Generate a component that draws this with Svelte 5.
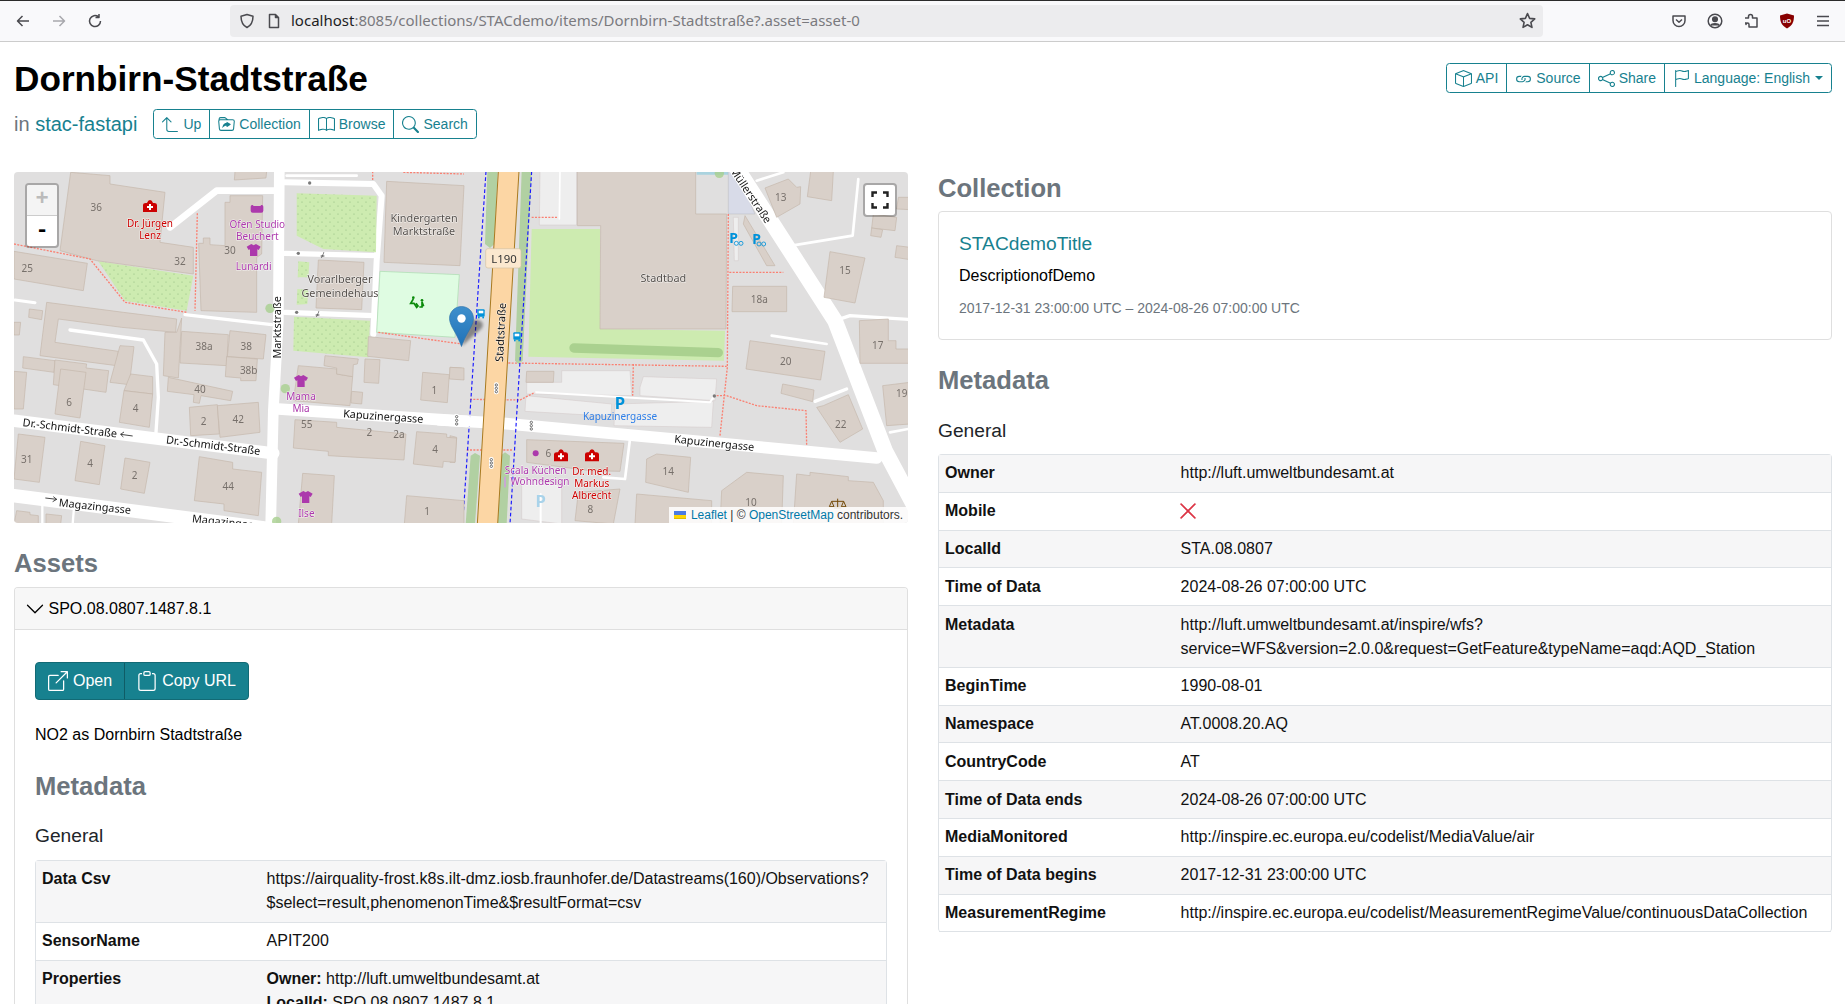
<script>
  const icons = {
    up: ["M4.854 1.146a.5.5 0 0 0-.708 0l-4 4a.5.5 0 1 0 .708.708L4 2.707V12.5A2.5 2.5 0 0 0 6.5 15h8a.5.5 0 0 0 0-1h-8A1.5 1.5 0 0 1 5 12.5V2.707l3.146 3.147a.5.5 0 1 0 .708-.708l-4-4z"],
    folder: ["m11.798 8.271-3.182 1.97c-.27.166-.616-.036-.616-.372V9.1s-2.571-.3-4 2.4c.571-4.8 3.143-4.8 4-4.8v-.769c0-.336.346-.538.616-.371l3.182 1.969c.27.166.27.576 0 .742z","m.5 3 .04.87a1.99 1.99 0 0 0-.342 1.311l.637 7A2 2 0 0 0 2.826 14h10.348a2 2 0 0 0 1.991-1.819l.637-7A2 2 0 0 0 13.81 3H9.828a2 2 0 0 1-1.414-.586l-.828-.828A2 2 0 0 0 6.172 1H2.5a2 2 0 0 0-2 2zm.694 2.09A1 1 0 0 1 2.19 4h11.62a1 1 0 0 1 .996 1.09l-.636 7a1 1 0 0 1-.996.91H2.826a1 1 0 0 1-.995-.91l-.637-7zM6.172 2a1 1 0 0 1 .707.293L7.586 3H2.19c-.24 0-.47.042-.683.12L1.5 2.98a1 1 0 0 1 1-.98h3.672z"],
    book: ["M1 2.828c.885-.37 2.154-.769 3.388-.893 1.33-.134 2.458.063 3.112.752v9.746c-.935-.53-2.12-.603-3.213-.493-1.18.12-2.37.461-3.287.811V2.828zm7.5-.141c.654-.689 1.782-.886 3.112-.752 1.234.124 2.503.523 3.388.893v9.923c-.918-.35-2.107-.692-3.287-.81-1.094-.111-2.278-.039-3.213.492V2.687zM8 1.783C7.015.936 5.587.81 4.287.94c-1.514.153-3.042.672-3.994 1.105A.5.5 0 0 0 0 2.5v11a.5.5 0 0 0 .707.455c.882-.4 2.303-.881 3.68-1.02 1.409-.142 2.59.087 3.223.877a.5.5 0 0 0 .78 0c.633-.79 1.814-1.019 3.222-.877 1.378.139 2.8.62 3.681 1.02A.5.5 0 0 0 16 13.5v-11a.5.5 0 0 0-.293-.455c-.952-.433-2.48-.952-3.994-1.105C10.413.809 8.985.936 8 1.783z"],
    search: ["M11.742 10.344a6.5 6.5 0 1 0-1.397 1.398h-.001c.03.04.062.078.098.115l3.85 3.85a1 1 0 0 0 1.415-1.414l-3.85-3.85a1.007 1.007 0 0 0-.115-.1zM12 6.5a5.5 5.5 0 1 1-11 0 5.5 5.5 0 0 1 11 0z"],
    box: ["M8.186 1.113a.5.5 0 0 0-.372 0L1.846 3.5 8 5.961 14.154 3.5 8.186 1.113zM15 4.239l-6.5 2.6v7.922l6.5-2.6V4.24zM7.5 14.762V6.838L1 4.239v7.925l6.5 2.6zM7.443.184a1.5 1.5 0 0 1 1.114 0l7.129 2.852A.5.5 0 0 1 16 3.5v8.662a1 1 0 0 1-.629.928l-7.185 2.874a.5.5 0 0 1-.372 0L.63 13.09a1 1 0 0 1-.63-.928V3.5a.5.5 0 0 1 .314-.464L7.443.184z"],
    link: ["M6.354 5.5H4a3 3 0 0 0 0 6h3a3 3 0 0 0 2.83-4H9c-.086 0-.17.01-.25.031A2 2 0 0 1 7 10.5H4a2 2 0 1 1 0-4h1.535c.218-.376.495-.714.82-1z","M9 5.5a3 3 0 0 0-2.83 4h1.098A2 2 0 0 1 9 6.5h3a2 2 0 1 1 0 4h-1.535a4.02 4.02 0 0 1-.82 1H12a3 3 0 1 0 0-6H9z"],
    share: ["M13.5 1a1.5 1.5 0 1 0 0 3 1.5 1.5 0 0 0 0-3zM11 2.5a2.5 2.5 0 1 1 .603 1.628l-6.718 3.12a2.499 2.499 0 0 1 0 1.504l6.718 3.12a2.5 2.5 0 1 1-.488.876l-6.718-3.12a2.5 2.5 0 1 1 0-3.256l6.718-3.12A2.504 2.504 0 0 1 11 2.5zm-8.5 4a1.5 1.5 0 1 0 0 3 1.5 1.5 0 0 0 0-3zm11 5.5a1.5 1.5 0 1 0 0 3 1.5 1.5 0 0 0 0-3z"],
    flag: ["M14.778.085A.5.5 0 0 1 15 .5V8a.5.5 0 0 1-.314.464L14.5 8l.186.464-.003.001-.006.003-.023.009a12.435 12.435 0 0 1-.397.15c-.264.095-.631.223-1.047.35-.816.252-1.879.523-2.71.523-.847 0-1.548-.28-2.158-.525l-.028-.01C7.68 8.71 7.14 8.5 6.5 8.5c-.7 0-1.638.23-2.437.477A19.626 19.626 0 0 0 3 9.342V15.5a.5.5 0 0 1-1 0V.5a.5.5 0 0 1 1 0v.282c.226-.079.496-.17.79-.26C4.606.272 5.67 0 6.5 0c.84 0 1.524.277 2.121.519l.043.018C9.286.788 9.828 1 10.5 1c.7 0 1.638-.23 2.437-.477a19.587 19.587 0 0 0 1.349-.476l.019-.007.004-.002.002-.001.001-.001h.001zM14 1.221c-.22.078-.48.167-.766.255-.81.252-1.872.523-2.734.523-.886 0-1.592-.286-2.203-.534l-.008-.003C7.662 1.21 7.139 1 6.5 1c-.669 0-1.606.229-2.415.478A21.294 21.294 0 0 0 3 1.845v6.433c.22-.078.48-.167.766-.255C4.576 7.77 5.638 7.5 6.5 7.5c.847 0 1.548.28 2.158.525l.028.01C9.32 8.29 9.86 8.5 10.5 8.5c.668 0 1.606-.229 2.415-.478A21.317 21.317 0 0 0 14 7.655V1.222z"],
    open: ["M8.636 3.5a.5.5 0 0 0-.5-.5H1.5A1.5 1.5 0 0 0 0 4.5v10A1.5 1.5 0 0 0 1.5 16h10a1.5 1.5 0 0 0 1.5-1.5V7.864a.5.5 0 0 0-1 0V14.5a.5.5 0 0 1-.5.5h-10a.5.5 0 0 1-.5-.5v-10a.5.5 0 0 1 .5-.5h6.636a.5.5 0 0 0 .5-.5z","M16 .5a.5.5 0 0 0-.5-.5h-5a.5.5 0 0 0 0 1h3.793L6.146 9.146a.5.5 0 1 0 .708.708L15 1.707V5.5a.5.5 0 0 0 1 0v-5z"],
    clip: ["M4 1.5H3a2 2 0 0 0-2 2V14a2 2 0 0 0 2 2h10a2 2 0 0 0 2-2V3.5a2 2 0 0 0-2-2h-1v1h1a1 1 0 0 1 1 1V14a1 1 0 0 1-1 1H3a1 1 0 0 1-1-1V3.5a1 1 0 0 1 1-1h1v-1z","M9.5 1a.5.5 0 0 1 .5.5v1a.5.5 0 0 1-.5.5h-3a.5.5 0 0 1-.5-.5v-1a.5.5 0 0 1 .5-.5h3zm-3-1A1.5 1.5 0 0 0 5 1.5v1A1.5 1.5 0 0 0 6.5 4h3A1.5 1.5 0 0 0 11 2.5v-1A1.5 1.5 0 0 0 9.5 0h-3z"],
    chev: ["M1.646 4.646a.5.5 0 0 1 .708 0L8 10.293l5.646-5.647a.5.5 0 0 1 .708.708l-6 6a.5.5 0 0 1-.708 0l-6-6a.5.5 0 0 1 0-.708z"],
    x: ["M2.146 2.854a.5.5 0 1 1 .708-.708L8 7.293l5.146-5.147a.5.5 0 0 1 .708.708L8.707 8l5.147 5.146a.5.5 0 0 1-.708.708L8 8.707l-5.146 5.147a.5.5 0 0 1-.708-.708L7.293 8 2.146 2.854Z"]
  };

  const navLeft = [["up","Up"],["folder","Collection"],["book","Browse"],["search","Search"]];
  const navRight = [["box","API"],["link","Source"],["share","Share"],["flag","Language: English"]];

  const rightRows = [
    ["Owner","http://luft.umweltbundesamt.at"],
    ["Mobile",null],
    ["LocalId","STA.08.0807"],
    ["Time of Data","2024-08-26 07:00:00 UTC"],
    ["Metadata","http://luft.umweltbundesamt.at/inspire/wfs?\nservice=WFS&version=2.0.0&request=GetFeature&typeName=aqd:AQD_Station"],
    ["BeginTime","1990-08-01"],
    ["Namespace","AT.0008.20.AQ"],
    ["CountryCode","AT"],
    ["Time of Data ends","2024-08-26 07:00:00 UTC"],
    ["MediaMonitored","http://inspire.ec.europa.eu/codelist/MediaValue/air"],
    ["Time of Data begins","2017-12-31 23:00:00 UTC"],
    ["MeasurementRegime","http://inspire.ec.europa.eu/codelist/MeasurementRegimeValue/continuousDataCollection"]
  ];

  // Map geometry. Coordinates are in tile units of 1/3 px.
  const b3 = [
    "212,25 330,35 330,60 495,85 480,235 580,250 580,330 290,290 180,260",
    "705,22 800,22 798,42 703,48",
    "675,115 690,115 690,95 788,95 785,270 770,280 770,445 603,440 596,238 610,238 610,222 630,222 630,242 675,245",
    "1160,52 1392,65 1380,305 1152,295",
    "42,262 262,298 250,380 42,345",
    "955,288 1092,295 1085,437 948,432",
    "140,415 370,445 530,465 527,505 365,490 175,465 165,535 355,562 350,605 120,575",
    "88,435 128,440 125,467 86,460",
    "42,475 62,475 58,513 42,513",
    "545,462 535,642 490,635 495,505 530,505",
    "545,502 685,512 680,605 540,597",
    "690,500 798,512 790,585 682,578",
    "680,578 772,585 768,650 722,650 722,642 676,638",
    "70,578 165,590 162,625 68,612",
    "165,588 260,600 258,612 326,620 318,685 160,662",
    "182,615 258,625 240,762 165,750",
    "360,545 402,548 388,662 330,655",
    "392,630 458,638 458,690 372,680",
    "372,680 458,690 448,790 358,775",
    "42,622 80,625 70,735 42,735",
    "505,640 698,682 692,710 603,695 598,718 580,715 582,692 502,682",
    "568,730 652,722 658,810 572,815",
    "652,725 775,715 780,805 660,820",
    "55,810 135,820 118,955 42,945",
    "242,832 315,845 298,962 225,950",
    "375,882 450,895 433,988 362,975",
    "598,878 698,895 698,915 785,925 775,1055 672,1040 672,1020 583,1010",
    "895,605 1010,615 1010,630 1058,638 1050,725 880,710",
    "975,575 1075,585 1072,600 1060,602 1058,638 1010,630 1010,612 972,605",
    "1105,518 1232,530 1226,590 1103,577",
    "1095,585 1140,587 1136,658 1092,655",
    "1055,682 1088,685 1085,720 1053,717",
    "1268,625 1348,632 1342,716 1262,708",
    "1350,610 1392,612 1392,648 1348,645",
    "885,767 1010,775 1010,790 1218,810 1212,888 985,875 985,862 880,852",
    "1250,803 1340,810 1340,820 1370,822 1365,895 1330,892 1328,910 1240,900",
    "908,928 1003,935 995,1080 895,1080",
    "1220,995 1392,1010 1392,1080 1213,1080",
    "138,1050 185,1055 182,1080 138,1080",
    "50,1040 90,1045 90,1052 115,1055 115,1080 42,1080"
  ];
  const b4 = [
    "382,22 737,22 737,150 830,150 828,495 450,495 452,185 382,185",
    "945,72 1015,45 1040,70 1052,68 1050,120 980,160",
    "1082,22 1150,22 1145,110 1072,98",
    "1270,150 1340,160 1335,200 1265,192",
    "1265,192 1298,197 1293,220 1262,215",
    "1340,245 1380,250 1380,287 1335,280",
    "1345,100 1380,100 1380,137 1340,135",
    "1140,263 1245,282 1228,357 1215,417 1122,400",
    "848,367 1010,367 1010,443 846,443",
    "1228,470 1315,465 1315,530 1338,530 1338,555 1380,555 1380,598 1230,598",
    "900,530 1125,562 1112,648 888,615",
    "998,660 1092,678 1088,713 993,688",
    "1120,725 1195,692 1238,795 1170,835 1100,730",
    "1298,665 1380,655 1380,780 1310,785",
    "230,622 312,622 310,655 228,655",
    "230,827 522,838 510,922 420,920 230,895",
    "590,885 620,870 722,880 715,985 587,955",
    "385,985 510,975 490,1080 375,1070",
    "815,980 890,925 1000,935 995,1080 810,1080",
    "560,990 785,1010 785,1080 555,1080",
    "1040,930 1080,935 1080,925 1195,938 1195,950 1270,955 1300,1010 1300,1080 1030,1080",
    "0,610 35,612 33,645 0,640",
    "0,815 20,820 15,895 0,895",
    "885,155 975,305 950,305 880,180"
  ];
  const parks3 = [
    "890,88 1130,95 1128,265 970,255 890,215",
    "295,292 580,335 560,440 375,410",
    "895,292 928,295 925,340 893,340",
    "892,375 925,378 922,420 890,422",
    "882,458 1110,470 1105,580 880,560"
  ];
  const pave4 = [
    "270,22 380,22 380,183 268,183",
    "335,620 540,620 545,695 260,690 230,690 230,655 335,655",
    "228,695 485,720 483,757 225,742",
    "570,670 580,638 800,645 795,710 570,695",
    "495,720 790,712 785,790 492,785",
    "215,940 335,965 335,1080 215,1065",
    "850,160 865,160 865,290 853,290"
  ];
  const roads3 = [
    ["838,15 835,470 820,740 812,1085",32],
    ["42,770 820,868",37],
    ["835,735 1400,772",35],
    ["42,995 820,1095",40],
    ["510,190 650,80 830,80",20],
    ["855,55 1120,60 1145,95 1130,290 1120,510",18],
    ["855,268 1130,275",16],
    ["855,445 1120,455",16],
    ["860,35 1070,35",8],
    ["555,452 815,482",10],
    ["210,498 430,528 470,600 475,700 468,805",10],
    ["45,408 105,416",9],
    ["127,1020 127,1080",7],
    ["222,1030 218,1080",7]
  ];
  const roads4 = [
    ["-30,768 160,778 1280,882",35],
    ["862,15 1155,470 1305,860 1395,1030",47],
    ["1225,45 1208,215 1025,245",8],
    ["920,50 1000,25",8],
    ["1155,470 1200,455 1385,467",10],
    ["965,515 1130,540",8],
    ["1095,712 1190,675",10],
    ["1320,805 1385,793",8],
    ["540,825 525,945 460,940",8],
    ["330,22 328,165",5],
    ["258,685 780,715 790,700",6],
    ["272,990 272,1080",6]
  ];
  const paths3 = [
    "42,240 270,285 375,415 560,445","592,148 585,440","1118,22 1118,50","1135,505 1385,540","1210,25 1392,30"
  ];
  const paths4 = [
    "245,160 325,160","835,150 832,610 810,815","838,325 1000,325","175,597 830,607","550,600 548,695",
    "60,706 210,708 255,685","800,695 830,695 920,725 1068,740 1070,845","50,858 190,858"
  ];
  const nums3 = [
    ["36",289,129],["32",540,290],["30",690,258],["25",82,312],["38a",612,546],["38",739,546],["38b",746,619],["40",600,675],
    ["6",207,713],["4",407,733],["2",611,770],["42",715,766],["31",80,886],["4",270,897],["2",404,934],["44",685,967],
    ["55",920,779],["2",1108,805],["2a",1197,809],["4",1305,856],["1",1303,677],["1",1281,1042]
  ];
  const nums4 = [
    ["13",992,98],["15",1185,318],["18a",928,405],["17",1283,543],["20",1007,590],["22",1172,780],["19",1355,687],
    ["14",655,920],["10",903,1015],["8",421,1035],["6",295,868]
  ];
  const shops3 = [["Ofen Studio",772,180],["Beuchert",772,216],["Lunardi",761,306],["Mama",903,697],["Mia",903,733],["Ilse",919,1047]];
  const med3 = [["Dr. Jürgen",450,178],["Lenz",450,213]];
  const med4 = [["Dr. med.",425,922],["Markus",425,958],["Albrecht",425,994]];
  const names3 = [["Kindergarten",1272,160],["Marktstraße",1272,199],["Vorarlberger",1020,345],["Gemeindehaus",1020,385]];
  const streets3 = [
    ["Marktstraße",830,490,-90],["Dr.-Schmidt-Straße",210,790,7],["Dr.-Schmidt-Straße",640,842,7],
    ["Kapuzinergasse",1150,755,4],["Magazingasse",285,1025,6],["Magazingasse",685,1073,6]
  ];
  const streets4 = [
    ["Stadtstraße",150,505,-87],["Kapuzinergasse",793,835,6],["Müllerstraße",904,92,56],["Schulgasse",1420,1080,68]
  ];
  const shirts = [[761,258],[903,651],[917,999]];
  const signals = [[18,769],[244,785],[139,673],[124,897]];
  const medIcons4 = [[333,875],[426,875]];
  const buses = [[93,449],[201,518]];
</script>

{#snippet icon(name, cls)}
  <svg class={cls} viewBox="0 0 16 16" fill="currentColor" aria-hidden="true">
    {#each icons[name] as d}<path {d} fill-rule="evenodd" />{/each}
  </svg>
{/snippet}

{#snippet medIcon(x, y)}
  <g transform="translate({x} {y})">
    <path d="M-21 17 V-4 Q-21 -10 -13 -10 H-9 Q-6 -19 0 -19 Q6 -19 9 -10 H13 Q21 -10 21 -4 V17 Z" fill="#c00" />
    <path d="M-3 -7 H3 V-1 H9 V5 H3 V11 H-3 V5 H-9 V-1 H-3 Z" fill="#fff" />
  </g>
{/snippet}

<div class="chrome">
  <div class="chrome-btns">
    <svg class="cb" viewBox="0 0 16 16"><path d="M14 8H2.500M7.500 3 2.500 8l5 5" /></svg>
    <svg class="cb dim" viewBox="0 0 16 16"><path d="M2 8h11.500M8.500 3l5 5-5 5" /></svg>
    <svg class="cb" viewBox="0 0 16 16"><path d="M13.500 8A5.500 5.500 0 1 1 11.500 3.800M12 1v3.500H8.500" /></svg>
  </div>
  <div class="urlbar">
    <svg class="cb shield" viewBox="0 0 16 16"><path d="M8 1.500 14 3.200c0 5-1.500 9-6 11.300C3.500 12.200 2 8.200 2 3.200Z" /></svg>
    <svg class="cb pageicon" viewBox="0 0 16 16"><path d="M3.500 1.500h6l3 3v10h-9zM9.500 1.500v3h3" /></svg>
    <span class="url"><b>localhost</b>:8085/collections/STACdemo/items/Dornbirn-Stadtstraße?.asset=asset-0</span>
    <svg class="cb star" viewBox="0 0 16 16"><path d="M8 1.500 10 6l4.800.5-3.600 3.200 1 4.800L8 12l-4.200 2.500 1-4.800L1.200 6.500 6 6Z" /></svg>
  </div>
  <div class="chrome-right">
    <svg class="cb" viewBox="0 0 16 16"><path d="M2 3h12v4.500a6 6 0 0 1-12 0ZM5 6.500 8 9.200l3-2.700" /></svg>
    <svg class="cb" viewBox="0 0 16 16"><circle cx="8" cy="8" r="6.800" /><circle cx="8" cy="6.300" r="2.300" class="solid" /><path d="M3.800 12.500c1-2.500 7.400-2.500 8.400 0" class="solid" /></svg>
    <svg class="cb" viewBox="0 0 16 16"><path d="M2 5h3.500V3.500a2 2 0 0 1 4 0V5H14v9H6v-2.500a1.500 1.500 0 0 0-3 0V10H2" /></svg>
    <svg class="cb ublock" viewBox="0 0 16 16"><path d="M8 .5 15 2.500c0 6-1.500 10-7 13-5.500-3-7-7-7-13Z" /><text x="8" y="10" text-anchor="middle">uO</text></svg>
    <svg class="cb" viewBox="0 0 16 16"><path d="M2 3.500h12M2 8h12M2 12.500h12" /></svg>
  </div>
</div>

<div class="page">
  <header class="head">
    <div>
      <h1>Dornbirn-Stadtstraße</h1>
      <div class="sub">
        <span class="in">in <a href="#top">stac-fastapi</a></span>
        <div class="group">
          {#each navLeft as [ic, label]}
            <a class="btn" href="#top">{@render icon(ic, "bi")}<span>{label}</span></a>
          {/each}
        </div>
      </div>
    </div>
    <div class="group top">
      {#each navRight as [ic, label], i}
        <a class="btn" href="#top">{@render icon(ic, "bi")}<span>{label}</span>{#if i === 3}<i class="caret"></i>{/if}</a>
      {/each}
    </div>
  </header>

  <main class="cols">
    <section>
      <div class="map">
        <svg class="tiles" viewBox="14 173 894 351" preserveAspectRatio="none">
          <rect x="14" y="173" width="894" height="351" class="land" />
          <defs>
            <pattern id="dots" width="24" height="24" patternUnits="userSpaceOnUse"><circle cx="6" cy="6" r="1.800" fill="#8fb77c" /><circle cx="18" cy="18" r="1.800" fill="#8fb77c" /></pattern>
          </defs>

          <g transform="translate(450 165) scale(.33333)">
            <polygon points="740,22 835,22 835,32 740,32" fill="#aad3df" />
            <polygon points="835,22 860,22 915,150 835,150" fill="#d8dbe8" stroke="#aaa" />
            {#each pave4 as points}<polygon {points} class="pave" />{/each}
            <polygon points="245,195 450,195 450,495 825,500 822,590 235,578" class="park" />
            <polyline points="372,552 805,566" class="strip" />
            {#each roads4 as [points, w]}<polyline {points} class="road" stroke-width={w} />{/each}
            {#each b4 as points}<polygon {points} class="bld" />{/each}
            {#each paths4 as points}<polyline {points} class="foot" />{/each}
            <polygon points="112,22 143,22 133,240 120,252 105,240" class="median" />
            <polygon points="215,22 245,22 218,590 205,600 195,590" class="median" />
            <polygon points="62,875 75,867 90,875 75,1080 47,1080" class="median" />
            <polygon points="152,875 165,865 180,875 170,1080 142,1080" class="median" />
            <polyline points="108,22 38,1080" class="cyc" />
            <polyline points="245,22 180,1080" class="cyc" />
            <polygon points="145,22 207,22 143,1080 82,1080" class="primary" />
            {#each signals as [x, y]}
              <g class="sig"><rect x={x - 7} y={y - 18} width="14" height="36" rx="6" /><circle cx={x} cy={y - 10} r="3.500" /><circle cx={x} cy={y} r="3.500" /><circle cx={x} cy={y + 10} r="3.500" /></g>
            {/each}
            <rect x="107" y="254" width="106" height="58" rx="7" class="shield-l190" />
            <text x="162" y="285" class="lbl road-name big">L190</text>
            {#each buses as [x, y]}
              <g class="bus"><rect x={x - 11} y={y - 13} width="22" height="22" rx="3" /><rect x={x - 7} y={y - 9} width="14" height="8" class="w" /><rect x={x - 9} y={y + 9} width="5" height="5" /><rect x={x + 4} y={y + 9} width="5" height="5" /></g>
            {/each}
            {#each streets4 as [t, x, y, r]}<text {x} {y} class="lbl road-name" transform="rotate({r} {x} {y})">{t}</text>{/each}
            {#each nums4 as [t, x, y]}<text {x} {y} class="lbl num">{t}</text>{/each}
            <text x="640" y="340" class="lbl place">Stadtbad</text>
            <text x="510" y="717" class="lbl pk">P</text>
            <text x="510" y="757" class="lbl pkname">Kapuzinergasse</text>
            <text x="272" y="1010" class="lbl pk faint">P</text>
            <text x="851" y="222" class="lbl pk small">P</text>
            <text x="920" y="224" class="lbl pk small">P</text>
            <g class="bike"><circle cx="859" cy="238" r="6" /><circle cx="873" cy="238" r="6" /><circle cx="927" cy="240" r="6" /><circle cx="941" cy="240" r="6" /></g>
            <circle cx="808" cy="28" r="14" class="tree" />
            <circle cx="793" cy="696" r="5" class="node" />
            <circle cx="257" cy="868" r="9" class="shopdot" />
            {#each medIcons4 as [x, y]}{@render medIcon(x, y)}{/each}
            <text x="257" y="917" class="lbl shop">Scala Küchen</text>
            <text x="270" y="952" class="lbl shop">Wohndesign</text>
            <rect x="162" y="938" width="6" height="32" class="shopbar" />
            {#each med4 as [t, x, y]}<text {x} {y} class="lbl med">{t}</text>{/each}
            <g class="scale"><path d="M1163 1004V1032M1145 1012H1181M1145 1012l-7 16h14zM1181 1012l-7 16h14zM1152 1032h22" /></g>
          </g>

          <g transform="translate(0 165) scale(.33333)">
            {#each roads3 as [points, w]}<polyline {points} class="road" stroke-width={w} />{/each}
            {#each parks3 as points}<polygon {points} class="park" /><polygon {points} fill="url(#dots)" />{/each}
            <polygon points="1140,322 1378,332 1365,520 1130,505" class="play" />
            {#each b3 as points}<polygon {points} class="bld" />{/each}
            {#each paths3 as points}<polyline {points} class="foot" />{/each}
            <circle cx="810" cy="433" r="14" class="tree" /><circle cx="856" cy="674" r="14" class="tree" /><circle cx="830" cy="1072" r="14" class="tree" />
            <circle cx="929" cy="57" r="5" class="node" /><circle cx="895" cy="268" r="5" class="node" /><circle cx="890" cy="445" r="5" class="node" />
            <text x="968" y="271" class="lbl oneway">≠</text><text x="953" y="449" class="lbl oneway">≠</text>
            <g class="sig"><rect x="1363" y="750" width="14" height="38" rx="6" /><circle cx="1370" cy="758" r="3.500" /><circle cx="1370" cy="769" r="3.500" /><circle cx="1370" cy="780" r="3.500" /></g>
            {@render medIcon(450, 127)}
            <g class="shopicon">
              <path d="M752 128q0-6 6-5l3 3h20l3-3q6-1 6 5v12q0 6-6 6h-26q-6 0-6-6z" />
              {#each shirts as [x, y]}
                <path transform="translate({x} {y})" d="M-7-18 0-14 7-18 21-10 15 0 11-2V18H-11V-2L-15 0-21-10Z" />
              {/each}
            </g>
            <g class="playicon"><circle cx="1240" cy="401" r="4" /><circle cx="1266" cy="409" r="4" /><path d="M1240 405l-8 13h10l8 12 4-4-6-8M1266 413v16h-8M1266 413l5 14" /></g>
            {#each nums3 as [t, x, y]}<text {x} {y} class="lbl num">{t}</text>{/each}
            {#each med3 as [t, x, y]}<text {x} {y} class="lbl med">{t}</text>{/each}
            {#each shops3 as [t, x, y]}<text {x} {y} class="lbl shop">{t}</text>{/each}
            {#each names3 as [t, x, y]}<text {x} {y} class="lbl place">{t}</text>{/each}
            {#each streets3 as [t, x, y, r]}<text {x} {y} class="lbl road-name" transform="rotate({r} {x} {y})">{t}</text>{/each}
            <path class="arrow" d="M398 816 362 811M372 804 362 811 370 819" />
            <path class="arrow" d="M136 1002 170 1006M160 998 170 1006 158 1013" />
          </g>
        </svg>

        <svg class="marker" viewBox="0 0 50 41" aria-hidden="true">
          <defs>
            <linearGradient id="pin" x1="0" y1="0" x2="0" y2="1"><stop offset="0" stop-color="#3f8fcc" /><stop offset="1" stop-color="#1f72b8" /></linearGradient>
            <filter id="sh" x="-30%" y="-30%" width="160%" height="160%"><feGaussianBlur stdDeviation="1.800" /></filter>
          </defs>
          <path d="M13 40 33 22q3-6-4-8-8-1-11 4Z" fill="#000" opacity=".4" filter="url(#sh)" />
          <path d="M12.500.5C5.800.5.500 5.800.500 12.500c0 2.500 1 5.500 2.500 8.500 3 5.500 6.500 11 9.500 19.500 3-8.500 6.500-14 9.500-19.500 1.500-3 2.500-6 2.500-8.500C24.500 5.800 19.200.5 12.500.5Z" fill="url(#pin)" stroke="#2a6fa8" stroke-width=".6" />
          <circle cx="12.500" cy="12.500" r="4.200" fill="#fff" />
        </svg>

        <div class="zoomctl">
          <span class="zin">+</span>
          <span class="zout">-</span>
        </div>
        <div class="fullctl">
          <svg viewBox="0 0 20 20"><path d="M2.500 7V2.500H7M13 2.500h4.500V7M17.500 13v4.500H13M7 17.500H2.500V13" /></svg>
        </div>
        <div class="attrib">
          <svg class="ua" viewBox="0 0 12 8"><rect width="12" height="4" fill="#4C7BE1" /><rect y="4" width="12" height="3" fill="#FFD500" /><rect y="7" width="12" height="1" fill="#E0BC00" /></svg>
          <a href="#top">Leaflet</a> <span class="sep">|</span> © <a href="#top">OpenStreetMap</a> contributors.
        </div>
      </div>

      <h3 class="assets">Assets</h3>
      <div class="acc">
        <div class="acc-head">{@render icon("chev", "chev")}<span>SPO.08.0807.1487.8.1</span></div>
        <div class="acc-body">
          <div class="group big">
            <a class="btn solid" href="#top">{@render icon("open", "bi")}<span>Open</span></a>
            <a class="btn solid" href="#top">{@render icon("clip", "bi")}<span>Copy URL</span></a>
          </div>
          <p class="desc">NO2 as Dornbirn Stadtstraße</p>
          <h3 class="meta">Metadata</h3>
          <h4 class="tight">General</h4>
          <table>
            <tbody>
              <tr><th>Data Csv</th><td>https://airquality-frost.k8s.ilt-dmz.iosb.fraunhofer.de/Datastreams(160)/Observations?<br />$select=result,phenomenonTime&amp;$resultFormat=csv</td></tr>
              <tr><th>SensorName</th><td>APIT200</td></tr>
              <tr><th>Properties</th><td><b>Owner:</b> http://luft.umweltbundesamt.at<br /><b>LocalId:</b> SPO.08.0807.1487.8.1</td></tr>
            </tbody>
          </table>
        </div>
      </div>
    </section>

    <section>
      <h3 class="collection">Collection</h3>
      <div class="card">
        <a class="card-title" href="#top">STACdemoTitle</a>
        <p class="card-desc">DescriptionofDemo</p>
        <p class="card-time">2017-12-31 23:00:00 UTC – 2024-08-26 07:00:00 UTC</p>
      </div>
      <h3 class="meta wide">Metadata</h3>
      <h4>General</h4>
      <table>
        <tbody>
          {#each rightRows as [k, v]}
            <tr>
              <th>{k}</th>
              <td>
                {#if v === null}
                  {@render icon("x", "no")}
                {:else}
                  {#each v.split("\n") as line}<div>{line}</div>{/each}
                {/if}
              </td>
            </tr>
          {/each}
        </tbody>
      </table>
    </section>
  </main>
</div>

<style>
  :global(html), :global(body) { margin: 0; height: 1004px; overflow: hidden; background: #fff; }
  :global(body) { font-family: "Liberation Sans", Arial, sans-serif; font-size: 16px; line-height: 1.5; color: #212529; }

  .chrome { height: 40px; box-sizing: content-box; background: #f9f9fb; border-top: 1px solid #2b2b2b; border-bottom: 1px solid #ccc; display: flex; align-items: center; }
  .chrome-btns { width: 230px; padding-left: 15px; box-sizing: border-box; display: flex; gap: 20px; flex: none; margin-top: -1px; }
  .cb { width: 16px; height: 16px; fill: none; stroke: #4a4a4f; stroke-width: 1.5; stroke-linejoin: round; flex: none; }
  .cb.dim { stroke: #a8a8ad; }
  .urlbar { width: 1313px; height: 32px; background: #ececee; border-radius: 4px; display: flex; align-items: center; flex: none; margin-top: -1px; padding: 0 0 0 9px; box-sizing: border-box; }
  .shield { margin-right: 11px; }
  .pageicon { margin-right: 9px; }
  .url { flex: 1; font-family: "Noto Sans", sans-serif; font-size: 15px; color: #7a7a7e; white-space: nowrap; }
  .url b { font-weight: 400; color: #1d1d1f; }
  .star { margin-right: 7px; width: 17px; height: 17px; }
  .chrome-right { flex: 1; display: flex; justify-content: flex-end; gap: 20px; padding-right: 14px; margin-top: -1px; }
  .solid { fill: #4a4a4f; }
  .ublock { fill: #800; stroke: none; }
  .ublock text { fill: #fff; font-size: 6px; font-family: "Liberation Sans", sans-serif; font-weight: 700; }

  .head { display: flex; justify-content: space-between; align-items: flex-start; padding: 16px 13px 0 14px; }
  h1 { margin: 0; font-size: 35.2px; line-height: 42px; font-weight: 700; color: #000; }
  .sub { display: flex; align-items: center; margin-top: 9px; gap: 16px; }
  .in { font-size: 20px; line-height: 30px; color: #6c757d; }
  .in a { color: #17818f; text-decoration: none; }

  .group { display: inline-flex; border: 1px solid #17818f; border-radius: 3.5px; height: 30px; box-sizing: border-box; color: #17818f; overflow: hidden; }
  .group.top { margin-top: 5px; }
  .btn { display: inline-flex; align-items: center; gap: 4px; padding: 0 8px; font-size: 14px; color: inherit; text-decoration: none; white-space: nowrap; }
  .btn + .btn { border-left: 1px solid #17818f; }
  .bi { width: 17px; height: 17px; flex: none; }
  .caret { display: inline-block; margin-left: 1px; border-top: 4.200px solid currentColor; border-left: 4.200px solid transparent; border-right: 4.200px solid transparent; }

  .group.big { height: 38px; background: #17818f; border-color: #126a75; border-radius: 4px; color: #fff; }
  .big .btn { font-size: 16px; padding: 0 12px; gap: 5px; }
  .big .btn + .btn { border-left-color: #0f5c66; }
  .big .bi { width: 20px; height: 20px; }

  .cols { display: grid; grid-template-columns: 894px 894px; gap: 30px; padding: 33px 13px 0 14px; }
  .map { position: relative; height: 351px; border-radius: 4px; overflow: hidden; }
  .tiles { display: block; width: 100%; height: 100%; filter: blur(.4px); }
  .land { fill: #e0dfdf; }
  .bld { fill: #d9d0c9; stroke: #c4b6ab; stroke-width: 2; }
  .park { fill: #cdebb0; }
  .pave { fill: #eeeeee; stroke: #d3c8c8; stroke-width: 1.500; }
  .play { fill: #dffce2; stroke: #a8dcae; stroke-width: 2; }
  .strip { fill: none; stroke: #aad18f; stroke-width: 28; stroke-linecap: round; }
  .road { fill: none; stroke: #fff; stroke-linecap: round; stroke-linejoin: round; }
  .foot { fill: none; stroke: #fa8072; stroke-width: 4; stroke-dasharray: 6 4; stroke-linejoin: round; }
  .cyc { fill: none; stroke: #1a1aff; stroke-width: 3.500; stroke-dasharray: 11 7; }
  .median { fill: #b1d0a2; }
  .primary { fill: #fcd6a4; stroke: #a8791f; stroke-width: 3; }
  .tree { fill: #a8cf8f; opacity: .8; }
  .node { fill: #7a7a7a; }
  .shopdot { fill: #ac39ac; }
  .shopbar { fill: #c9a8d2; }
  .sig rect { fill: #fff; stroke: none; }
  .sig circle { fill: none; stroke: #555; stroke-width: 2.500; }
  .bus rect { fill: #0092da; }
  .bus .w { fill: #fff; }
  .bike circle { fill: none; stroke: #0092da; stroke-width: 2.500; }
  .shopicon { fill: #ac39ac; }
  .playicon circle { fill: #0a8a0a; }
  .playicon path { fill: none; stroke: #0a8a0a; stroke-width: 5; }
  .scale path { fill: none; stroke: #734a08; stroke-width: 3; }
  .arrow { fill: none; stroke: #222; stroke-width: 2.500; }
  .shield-l190 { fill: #fbe8cf; stroke: #d4c2a5; stroke-width: 2; }
  .lbl { font-family: "Noto Sans", sans-serif; font-size: 30px; text-anchor: middle; dominant-baseline: central; paint-order: stroke; stroke: rgba(255,255,255,.75); stroke-width: 3px; }
  .num { fill: #77706b; stroke: none; }
  .med { fill: #c00; }
  .shop { fill: #ac39ac; }
  .place { fill: #55504c; font-size: 32.5px; }
  .road-name { fill: #111; font-size: 32.5px; }
  .road-name.big { font-size: 34px; fill: #333; stroke: none; }
  .oneway { fill: #444; font-size: 24px; stroke: none; }
  .pk { fill: #0092da; font-weight: 700; font-size: 50px; stroke: none; }
  .pk.faint { fill: #a9d3ea; }
  .pk.small { font-size: 42px; }
  .pkname { fill: #2e7fe8; font-size: 30px; stroke: none; }

  .marker { position: absolute; left: 435px; top: 134px; width: 50px; height: 41px; overflow: visible; }
  .zoomctl { position: absolute; left: 11px; top: 11px; width: 30px; border: 2px solid rgba(0,0,0,.25); border-radius: 4px; background: #fff; background-clip: padding-box; display: flex; flex-direction: column; }
  .zoomctl span { height: 30px; display: flex; align-items: center; justify-content: center; font: 700 22px/30px "Liberation Mono", monospace; }
  .zin { background: #f4f4f4; color: #bbb; border-bottom: 1px solid #ccc; border-radius: 2px 2px 0 0; }
  .zout { color: #000; }
  .fullctl { position: absolute; right: 11px; top: 11px; width: 30px; height: 30px; border: 2px solid rgba(0,0,0,.25); border-radius: 4px; background: #fff; background-clip: padding-box; display: flex; align-items: center; justify-content: center; }
  .fullctl svg { width: 20px; height: 20px; fill: none; stroke: #222; stroke-width: 2.400; }
  .attrib { position: absolute; right: 0; bottom: 0; background: rgba(255,255,255,.85); font-size: 12px; line-height: 16px; padding: 0 5px; color: #333; white-space: nowrap; }
  .attrib a { color: #0078a8; text-decoration: none; }
  .ua { width: 12px; height: 8px; margin-right: 2px; }

  h3 { margin: 0; font-size: 25.6px; line-height: 31px; font-weight: 700; color: #6c757d; }
  h4 { margin: 23px 0 12px; font-size: 19.2px; line-height: 23px; font-weight: 400; color: #212529; }
  h4.tight { margin: 22px 0 13px; }
  .assets { margin-top: 25px; }
  .meta { margin-top: 24px; }
  .meta.wide { margin-top: 25px; }
  .collection { margin-top: 1px; }

  .acc { margin-top: 8px; border: 1px solid #dfdfdf; border-radius: 4px 4px 0 0; border-bottom: 0; }
  .acc-head { height: 42px; box-sizing: border-box; background: #f7f7f7; border-bottom: 1px solid #dfdfdf; display: flex; align-items: center; gap: 3.5px; padding: 0 10px; color: #000; border-radius: 3px 3px 0 0; }
  .chev { width: 20px; height: 20px; flex: none; }
  .acc-body { padding: 32px 20px 0; }
  .desc { margin: 23px 0 0; color: #000; }

  .card { margin-top: 7px; border: 1px solid #dfdfdf; border-radius: 4px; padding: 20px 20px 16px; height: 129px; box-sizing: border-box; }
  .card-title { display: block; font-size: 19.2px; line-height: 23px; color: #17818f; text-decoration: none; }
  .card-desc { margin: 9px 0 0; color: #000; }
  .card-time { margin: 10px 0 0; font-size: 14px; line-height: 21px; color: #6c757d; }

  table { width: 100%; border-collapse: separate; border-spacing: 0; border: 1px solid #dee2e6; border-bottom: 0; border-radius: 4px; color: #111; }
  th, td { padding: 6.400px 7px; line-height: 24px; vertical-align: top; text-align: left; border-bottom: 1px solid #dee2e6; }
  th { width: 26.300%; font-weight: 700; padding-left: 6px; padding-right: 8px; }
  tr:nth-child(odd) th, tr:nth-child(odd) td { background: #f6f6f7; }
  .no { width: 20px; height: 20px; color: #dc3545; display: block; margin: 2px 0 2px -2.500px; stroke: currentColor; stroke-width: .5; }
</style>
